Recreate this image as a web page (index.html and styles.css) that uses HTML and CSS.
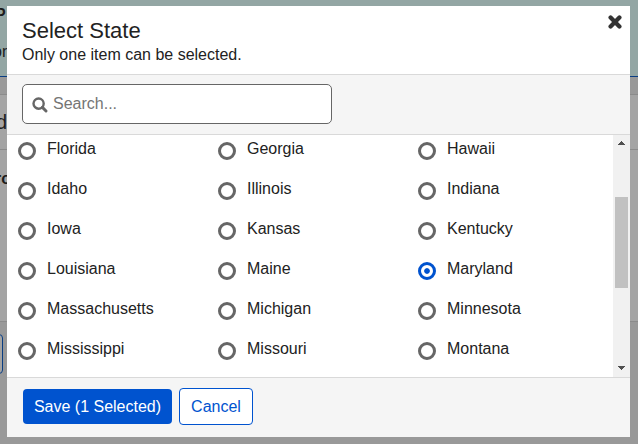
FILE: index.html
```html
<!DOCTYPE html>
<html lang="en">
<head>
<meta charset="utf-8">
<title>Select State</title>
<link rel="stylesheet" href="styles.css">
</head>
<body>
<div class="page">
  <div class="banner"><b>P</b><span>or</span></div>
  <div class="gap"></div>
  <div class="panel-title">d</div>
  <div class="panel-body"><b>ro</b></div>
  <div class="panel-foot"><div class="page-button"></div></div>
</div>
<div class="modal" role="dialog" aria-labelledby="title">
  <header class="modal-header">
    <div>
      <h1 id="title">Select State</h1>
      <p>Only one item can be selected.</p>
    </div>
    <button class="close" aria-label="Close"><svg width="14" height="14" viewBox="0 0 14 14"><path d="M2.6 2.6 11.4 11.4M11.4 2.6 2.6 11.4" fill="none" stroke="#333" stroke-width="4.3" stroke-linecap="round"/></svg></button>
  </header>
  <div class="search-bar">
    <label class="search">
      <svg width="16" height="16" viewBox="0 0 16 16"><circle cx="6.6" cy="6.6" r="5.1" fill="none" stroke="#666" stroke-width="2.4"/><path d="M10.4 10.4 14 14" fill="none" stroke="#666" stroke-width="2.9" stroke-linecap="round"/></svg>
      <input type="text" placeholder="Search...">
    </label>
  </div>
  <div class="list">
    <div class="options">
      <div class="option"><i class="radio"></i><span>Florida</span></div>
      <div class="option"><i class="radio"></i><span>Georgia</span></div>
      <div class="option"><i class="radio"></i><span>Hawaii</span></div>
      <div class="option"><i class="radio"></i><span>Idaho</span></div>
      <div class="option"><i class="radio"></i><span>Illinois</span></div>
      <div class="option"><i class="radio"></i><span>Indiana</span></div>
      <div class="option"><i class="radio"></i><span>Iowa</span></div>
      <div class="option"><i class="radio"></i><span>Kansas</span></div>
      <div class="option"><i class="radio"></i><span>Kentucky</span></div>
      <div class="option"><i class="radio"></i><span>Louisiana</span></div>
      <div class="option"><i class="radio"></i><span>Maine</span></div>
      <div class="option"><i class="radio checked"></i><span>Maryland</span></div>
      <div class="option"><i class="radio"></i><span>Massachusetts</span></div>
      <div class="option"><i class="radio"></i><span>Michigan</span></div>
      <div class="option"><i class="radio"></i><span>Minnesota</span></div>
      <div class="option"><i class="radio"></i><span>Mississippi</span></div>
      <div class="option"><i class="radio"></i><span>Missouri</span></div>
      <div class="option"><i class="radio"></i><span>Montana</span></div>
    </div>
    <div class="scrollbar">
      <svg width="17" height="17" viewBox="0 0 17 17" shape-rendering="crispEdges"><path d="M8 6h1v1h1v1h1v1h1v1H5V9h1V8h1V7h1z" fill="#505050"/></svg>
      <div class="thumb"></div>
      <svg width="17" height="17" viewBox="0 0 17 17" shape-rendering="crispEdges"><path d="M5 6h7v1h-1v1h-1v1H9v1H8V9H7V8H6V7H5z" fill="#505050"/></svg>
    </div>
  </div>
  <footer class="modal-footer">
    <button class="save">Save (1 Selected)</button>
    <button class="cancel">Cancel</button>
  </footer>
</div>
</body>
</html>
```
FILE: styles.css
```css
* { box-sizing: border-box; }
body {
  margin: 0;
  height: 444px;
  overflow: hidden;
  font: 16px/20px "Liberation Sans", Arial, sans-serif;
  color: #222;
}
.page { height: 444px; background: #999; color: #1c1c1c; }
.banner {
  height: 77px;
  padding-top: 5px;
  background: #93a6a4;
  border-bottom: 1px solid #093d83;
}
.banner b, .banner span { display: block; margin-left: -5px; }
.banner span { margin-top: 17px; margin-left: -7px; }
.gap { height: 17px; }
.panel-title {
  height: 56px;
  padding-top: 17px;
  border-top: 1px solid #8b8b8b;
  border-bottom: 1px solid #8b8b8b;
  background: #a4a4a4;
  font-size: 20px;
  text-indent: -4px;
}
.panel-body {
  height: 172px;
  padding-top: 19px;
  border-bottom: 1px solid #8b8b8b;
  background: #a4a4a4;
  text-indent: -5px;
}
.panel-foot { padding-top: 12px; }
.page-button {
  width: 13px;
  height: 40px;
  margin-left: -10px;
  border: 1px solid #093d83;
  border-radius: 4px;
  background: #a4a4a4;
}
.modal {
  position: absolute;
  left: 7px;
  top: 6px;
  width: 623px;
  height: 431px;
  display: flex;
  flex-direction: column;
  background: #fff;
}
.modal-header {
  height: 69px;
  padding: 12px 8.5px 0 15px;
  display: flex;
  justify-content: space-between;
  align-items: flex-start;
  border-bottom: 1px solid #d9d9d9;
}
h1 { margin: 0; font-size: 22px; line-height: 26px; font-weight: 400; }
p { margin: 0; line-height: 22px; }
button { font: inherit; margin: 0; }
.close { padding: 0; border: 0; background: none; margin-top: -3.5px; height: 14px; }
.close svg { display: block; }
.search-bar {
  height: 60px;
  padding: 9px 15px;
  background: #f5f5f5;
  border-bottom: 1px solid #d9d9d9;
}
.search {
  display: flex;
  align-items: center;
  width: 310px;
  height: 40px;
  padding: 0 9px;
  gap: 5px;
  border: 1px solid #666;
  border-radius: 5px;
  background: #fff;
}
.search svg { margin-top: 2px; }
.search input {
  flex: 1;
  min-width: 0;
  height: 18px;
  padding: 0;
  border: 0;
  outline: 0;
  font: inherit;
  background: none;
}
.search input::placeholder { color: #757575; opacity: 1; }
.list { flex: 1; display: flex; min-height: 0; overflow: hidden; }
.options {
  flex: 1;
  min-width: 0;
  display: grid;
  grid-template-columns: 200px 200px 1fr;
  grid-auto-rows: 40px;
  align-content: start;
  padding: 4px 0 0 11px;
}
.option { display: flex; gap: 11px; align-items: flex-start; }
.radio {
  width: 18px;
  height: 18px;
  margin-top: 3px;
  border: 3px solid #666;
  border-radius: 50%;
}
.radio.checked {
  border-color: #0053cf;
  background: radial-gradient(circle, #0053cf 2.4px, #fff 3.2px);
}
.scrollbar {
  flex: none;
  width: 17px;
  display: flex;
  flex-direction: column;
  background: #f1f1f1;
}
.scrollbar svg { display: block; }
.thumb { height: 91px; margin: 45px 2px auto; background: #c1c1c1; }
.modal-footer {
  height: 60px;
  padding: 10px 16px 12px;
  display: flex;
  align-items: center;
  gap: 7px;
  background: #f5f5f5;
  border-top: 1px solid #d9d9d9;
}
.save, .cancel { border-radius: 4px; padding: 0; }
.save {
  width: 149px;
  height: 35px;
  border: 0;
  background: #0053cf;
  color: #fff;
}
.cancel {
  width: 74px;
  height: 37px;
  border: 1px solid #0053cf;
  background: #fff;
  color: #0053cf;
}
```
